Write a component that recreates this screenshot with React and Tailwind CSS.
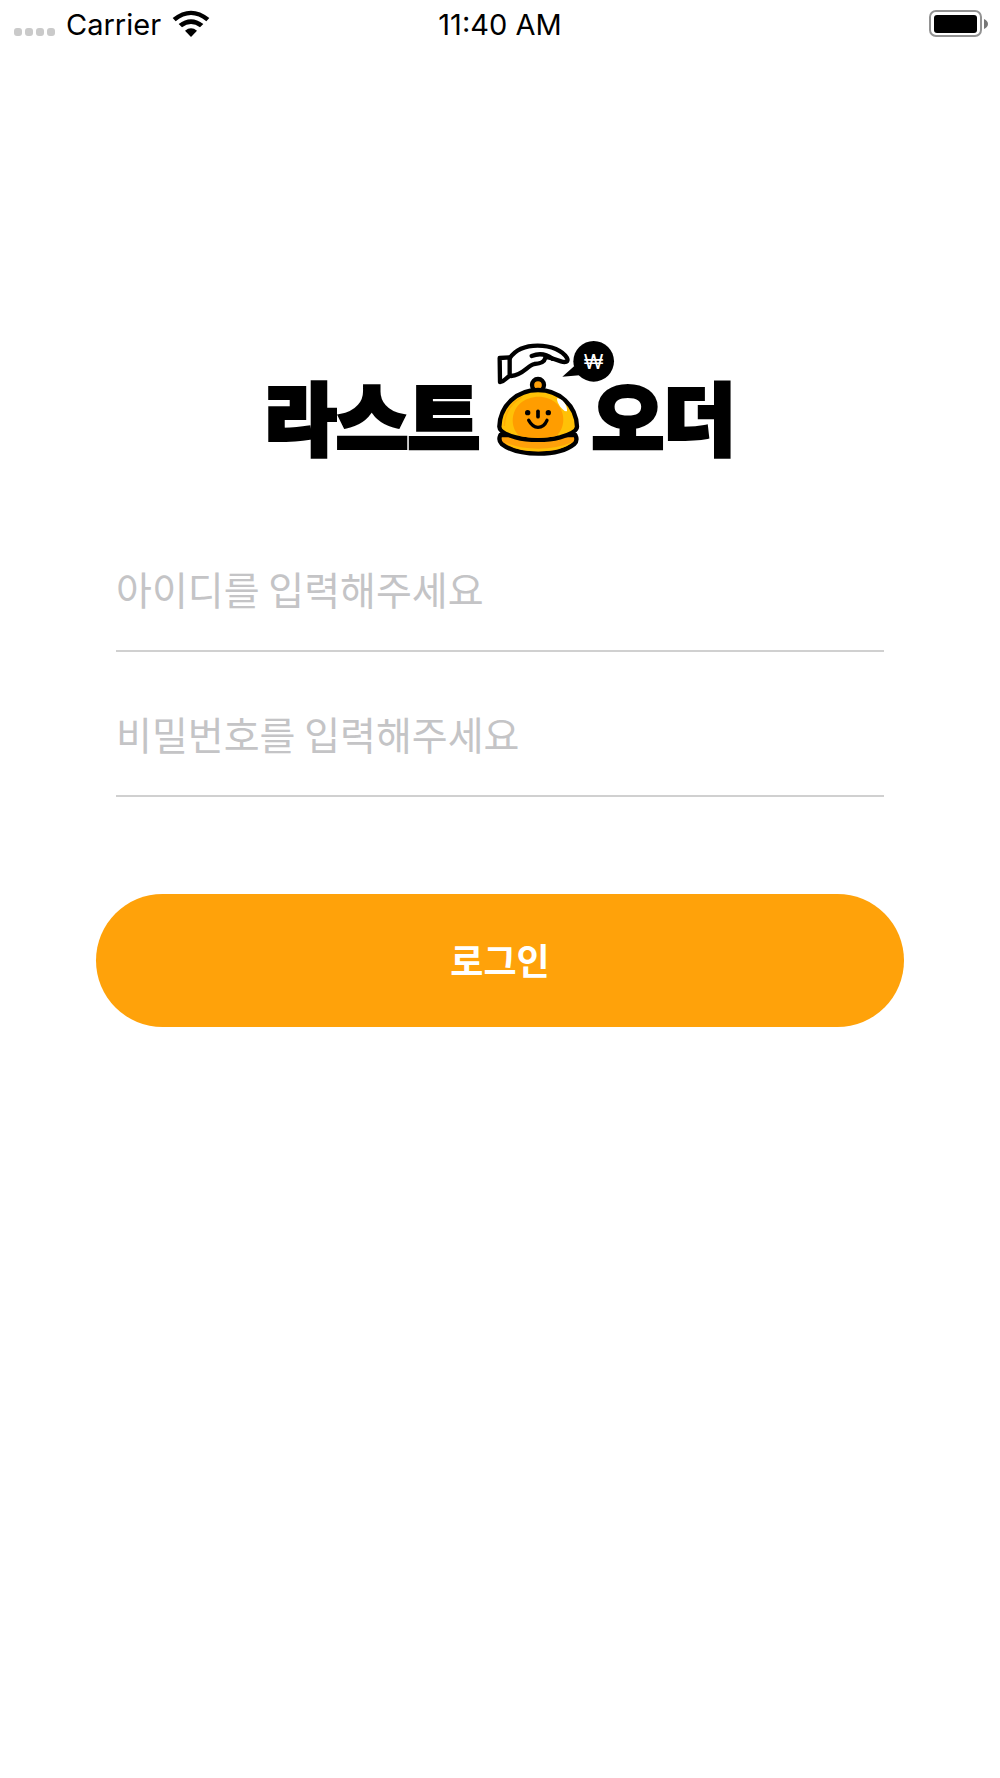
import React, { useState } from 'react'

const SignalDots = () => (
  <div className='flex items-center gap-[3px] pt-4'>
    <span className='size-2 rounded-[3px] bg-[#cacaca]' />
    <span className='size-2 rounded-[3px] bg-[#cacaca]' />
    <span className='size-2 rounded-[3px] bg-[#cacaca]' />
    <span className='size-2 rounded-[3px] bg-[#cacaca]' />
  </div>
)

const Wifi = () => (
  <svg width='38' height='28' viewBox='0 0 114 84' aria-hidden='true'>
    <path d='M2 24 Q57 -20 112 24 L103 34 Q57 -4 11 34 Z' />
    <path d='M20 42 Q57 14 94 42 L84 52 Q57 32 30 52 Z' />
    <path d='M39 62 Q57 48 75 62 L57 81 Z' />
  </svg>
)

const Battery = () => (
  <svg width='60' height='28' viewBox='0 0 60 28' aria-hidden='true'>
    <rect x='2' y='1' width='51' height='25' rx='6' fill='none' stroke='#929292' strokeWidth='2' />
    <rect x='6' y='5' width='43' height='18' rx='3' />
    <path d='M56 9 Q60 11 60 14 Q60 17 56 19 Z' fill='#777' />
  </svg>
)

const StatusBar = () => (
  <header className='grid grid-cols-3 items-center h-12 px-3 font-["Inter",sans-serif] text-[29px] leading-none'>
    <div className='flex items-center gap-[11px] pl-0.5'>
      <SignalDots />
      <span>Carrier</span>
      <Wifi />
    </div>
    <time className='text-center'>11:40 AM</time>
    <div className='flex justify-end'>
      <Battery />
    </div>
  </header>
)

// service bell with the hand above it, the won bubble hangs over the next word
const Bell = () => (
  <svg className='overflow-visible shrink-0' width='104' height='122' viewBox='27 15 312 366' aria-hidden='true'>
    <g stroke='#000' strokeWidth='13' strokeLinecap='round' strokeLinejoin='round'>
      <path d='M64 315 Q57 331 68 342 Q105 371 178 371 Q250 371 286 342 Q297 331 289 315 Z' fill='#ffa00a' />
      <circle cx='177' cy='165' r='18' fill='#ffa00a' />
      <path d='M61 290 C63 226 114 180 177 180 C240 180 292 226 294 290 C294 304 270 314 243 322 C205 332 148 332 110 322 C82 314 61 304 61 290 Z' fill='#ffc107' />
    </g>
    <path d='M76 337 Q122 356 178 356 Q235 356 280 337 Q246 364 178 364 Q112 364 76 337 Z' fill='#ffc107' />
    <path d='M122 318 C94 296 94 246 124 220 C154 194 204 194 232 220 C262 248 258 296 232 318 C200 326 154 326 122 318 Z' fill='#ff9d00' />
    <path d='M76 288 C78 244 98 218 128 202' fill='none' stroke='#ffab05' strokeWidth='4' />
    <path d='M234 205 C248 205 266 224 264 243 C256 250 232 220 234 205 Z' fill='#fff' />
    <circle cx='146' cy='248' r='8' />
    <circle cx='208' cy='248' r='8' />
    <g fill='none' stroke='#000' strokeLinecap='round'>
      <path d='M177 244 V260' strokeWidth='11' />
      <path d='M149 271 Q160 292 177 292 Q195 292 204 271' strokeWidth='10' />
    </g>
    <g fill='#fff' stroke='#000' strokeWidth='13' strokeLinecap='round' strokeLinejoin='round'>
      <path d='M92 85 C110 58 140 47 176 47 C218 47 250 62 264 84 C270 96 258 98 246 94 L216 84 C208 81 200 81 198 86 C196 96 180 101 166 102 C146 106 132 136 96 138' />
      <path d='M158 78 C178 70 200 71 220 86' fill='none' />
      <path d='M62 84 L92 82 V138 C82 142 78 155 63 156 Z' />
    </g>
    <path d='M286 108 L250 140 L318 134 Z' />
    <circle cx='344' cy='94' r='61' />
    <text x='344' y='117' textAnchor='middle' fill='#fff' className='font-["Inter",sans-serif] font-normal text-[62px]'>₩</text>
  </svg>
)

const Logo = () => (
  <h1 className='flex justify-center items-end text-[78px] leading-[84px] font-black whitespace-nowrap [-webkit-text-stroke:4px_#000]'>
    <span>라스트</span>
    <span className='ml-2 [-webkit-text-stroke:0px]'><Bell /></span>
    <span>오더</span>
  </h1>
)

const Field = ({ label, type, value, onChange }) => (
  <div className='border-b-2 border-[#d0d0d0]'>
    <input
      type={type}
      value={value}
      placeholder={label}
      aria-label={label}
      onChange={(e) => onChange(e.target.value)}
      className='block w-full h-[122px] pb-0.5 text-[39px] outline-none placeholder:text-[#c4c4c6]'
    />
  </div>
)

const App = () => {

  const [id, setId] = useState('')
  const [password, setPassword] = useState('')

  return (
    <div className='min-h-screen bg-white text-black font-["Noto_Sans_CJK_KR",sans-serif]'>
      <StatusBar />

      <main className='px-24 pt-[287px]'>
        <Logo />

        <form className='pt-[71px]' onSubmit={(e) => e.preventDefault()}>
          <div className='flex flex-col gap-[21px] px-5'>
            <Field label='아이디를 입력해주세요' type='text' value={id} onChange={setId} />
            <Field label='비밀번호를 입력해주세요' type='password' value={password} onChange={setPassword} />
          </div>

          <button type='submit' className='mt-[97px] pb-1 w-full h-[133px] rounded-full bg-[#ffa20a] text-white text-[36px] font-bold cursor-pointer'>
            로그인
          </button>
        </form>
      </main>
    </div>
  )
}

export default App
